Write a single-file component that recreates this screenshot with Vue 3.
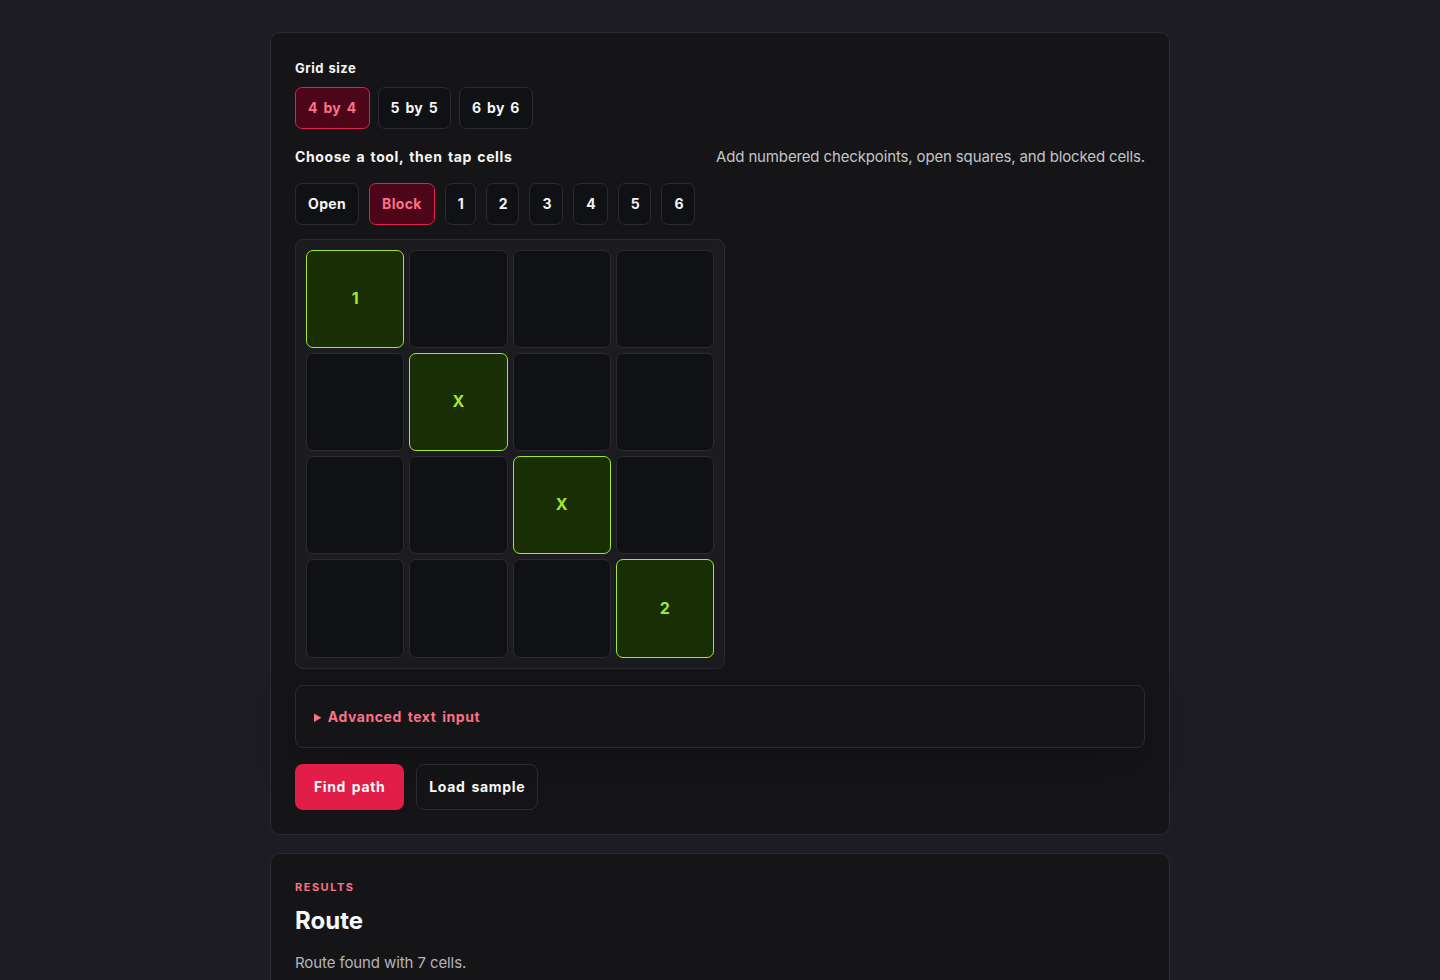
<template>
  <main class="page">
    <section class="card">
      <div class="label">Grid size</div>
      <div class="btn-row size-row">
        <button
          v-for="s in sizes"
          :key="s"
          class="chip"
          :class="{ active: s === size }"
          @click="size = s"
        >
          {{ s }} by {{ s }}
        </button>
      </div>

      <div class="tool-head">
        <div class="tool-title">Choose a tool, then tap cells</div>
        <div class="tool-hint">Add numbered checkpoints, open squares, and blocked cells.</div>
      </div>

      <div class="btn-row tool-row">
        <button
          v-for="t in tools"
          :key="t"
          class="chip"
          :class="{ active: t === tool, num: t.length === 1 }"
          @click="tool = t"
        >
          {{ t }}
        </button>
      </div>

      <div class="board">
        <div v-for="(c, i) in cells" :key="i" class="cell" :class="{ filled: c }">{{ c }}</div>
      </div>

      <details class="advanced">
        <summary>Advanced text input</summary>
      </details>

      <div class="actions">
        <button class="primary">Find path</button>
        <button class="secondary">Load sample</button>
      </div>
    </section>

    <section class="card results">
      <div class="eyebrow">RESULTS</div>
      <h2>Route</h2>
      <p>Route found with 7 cells.</p>
    </section>
  </main>
</template>

<script setup>
import { ref } from "vue";

const sizes = [4, 5, 6];
const size = ref(4);
const tools = ["Open", "Block", "1", "2", "3", "4", "5", "6"];
const tool = ref("Block");

const cells = ["1", "", "", "", "", "X", "", "", "", "", "X", "", "", "", "", "2"];
</script>

<style scoped>
.page {
  width: 900px;
  margin: 0 auto;
  padding: 32px 0 24px;
  font-family: Inter, "Liberation Sans", sans-serif;
  color: #f5f5f5;
}

.card {
  box-sizing: border-box;
  background: #151518;
  border: 1px solid #2a2a32;
  border-radius: 10px;
  padding: 24px;
}

.label {
  font-size: 13px;
  line-height: 23px;
  font-weight: 700;
  letter-spacing: 0.5px;
  word-spacing: 1px;
}

.btn-row {
  display: flex;
  gap: 8px;
}

.size-row {
  margin-top: 7px;
}

.size-row .chip {
  letter-spacing: 0.32px;
}

.tool-row {
  gap: 10px;
  margin-top: 15px;
}

.chip {
  height: 42px;
  padding: 0 12px 2px;
  background: #101114;
  border: 1px solid #2a2a32;
  border-radius: 7px;
  color: #f5f5f5;
  font: 700 14px Inter, "Liberation Sans", sans-serif;
  letter-spacing: 0.35px;
  word-spacing: 2px;
}

.chip.num {
  letter-spacing: -1.15px;
}

.chip.active {
  background: #4c0519;
  border-color: #e11d48;
  color: #fb7185;
}

.tool-head {
  display: flex;
  justify-content: space-between;
  align-items: center;
  margin-top: 15px;
  height: 24px;
}

.tool-title {
  font-size: 14px;
  font-weight: 700;
  letter-spacing: 0.6px;
  word-spacing: 1.5px;
}

.tool-hint {
  font-size: 15px;
  letter-spacing: -0.14px;
  color: #c4c4c8;
}

.board {
  box-sizing: border-box;
  display: grid;
  grid-template-columns: repeat(4, 98.25px);
  grid-auto-rows: 98.25px;
  gap: 5px;
  width: 430px;
  height: 430px;
  margin-top: 13.7px;
  padding: 10px;
  background: #1c1c20;
  border: 1px solid #2a2a30;
  border-radius: 8px;
}

.cell {
  box-sizing: border-box;
  display: flex;
  align-items: center;
  justify-content: center;
  padding-bottom: 2px;
  background: #101114;
  border: 1px solid #2a2a32;
  border-radius: 7px;
  font-size: 16px;
  font-weight: 700;
}

.cell.filled {
  background: #1a2e05;
  border-color: #a3e635;
  color: #a3e635;
}

.advanced {
  margin-top: 16.3px;
  padding: 18px;
  border: 1px solid #2a2a32;
  border-radius: 8px;
  box-shadow: 0 18px 50px rgba(0, 0, 0, 0.16);
}

.advanced summary {
  height: 25px;
  font-size: 14px;
  line-height: 25px;
  font-weight: 700;
  color: #fb7185;
  letter-spacing: 0.55px;
  word-spacing: 2px;
}

.advanced summary::marker {
  font-size: 13px;
}

.actions {
  display: flex;
  gap: 12px;
  margin-top: 16px;
}

.primary,
.secondary {
  height: 46px;
  border-radius: 8px;
  font: 700 14px Inter, "Liberation Sans", sans-serif;
  letter-spacing: 0.6px;
  word-spacing: 2px;
  color: #f8f8f8;
}

.primary {
  padding: 0 19px;
  background: #e11d48;
  border: none;
}

.secondary {
  padding: 0 12px;
  letter-spacing: 0.68px;
  background: transparent;
  border: 1px solid #2a2a32;
}

.results {
  margin-top: 18px;
}

.eyebrow {
  font-size: 11px;
  line-height: 18px;
  font-weight: 700;
  letter-spacing: 1.5px;
  color: #fb7185;
}

h2 {
  margin: 9px 0 0;
  font-size: 24px;
  line-height: 32px;
  font-weight: 700;
  color: #fafafa;
}

p {
  margin: 14px 0 0;
  font-size: 15px;
  line-height: 24px;
  letter-spacing: -0.1px;
  color: #b4b4b8;
}
</style>

<style>
body {
  background: #1d1c24;
}
</style>
